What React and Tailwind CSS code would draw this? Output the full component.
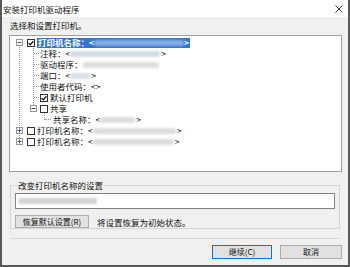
const Expander = ({ plus }) => (
  <svg width="7" height="7" viewBox="0 0 7 7" className="shrink-0">
    <rect x="0.5" y="0.5" width="6" height="6" fill="#fff" stroke="#959595" />
    <path d="M1.5 3.5h4" stroke="#3b5a8c" />
    {plus && <path d="M3.5 1.5v4" stroke="#3b5a8c" />}
  </svg>
);

const Check = ({ checked }) => (
  <svg width="8" height="8" viewBox="0 0 8 8" className="shrink-0">
    <rect x="0.5" y="0.5" width="7" height="7" fill="#fff" stroke="#333" />
    {checked && <path d="M1.6 4.1 3.2 5.7 6.4 2.2" fill="none" stroke="#1a1a1a" strokeWidth="1.3" />}
  </svg>
);

const Blur = ({ className }) => (
  <span className={`h-[6px] shrink-0 rounded-[2px] blur-[0.8px] ${className}`} />
);

export default function App() {
  return (
    <div className="flex h-[267px] w-[350px] flex-col border-x-2 border-b-2 border-[#595959] bg-[#f0f0f0] font-['Noto_Sans_CJK_SC',sans-serif] text-[8.5px] leading-[10px] text-[#111]">
      {/* title bar */}
      <div className="flex h-[17px] shrink-0 items-center justify-between bg-white pl-[1px] pr-[5px]">
        <span>安装打印机驱动程序</span>
        <svg width="8" height="8" viewBox="0 0 8 8">
          <path d="M0.5 0.5l7 7M7.5 0.5l-7 7" stroke="#222" strokeWidth="0.9" />
        </svg>
      </div>

      <div className="mt-[3px] h-[10px] pl-[8px]">选择和设置打印机。</div>

      {/* tree */}
      <div className="relative ml-[7px] mr-[6px] mt-[5px] h-[137px] border border-[#a0a0a0] bg-white pt-[1px] leading-[11px]">
        <div className="absolute left-[9px] top-[7px] h-[99px] border-l border-dotted border-[#9a9a9a]" />
        <div className="absolute left-[23px] top-[12px] h-[61px] border-l border-dotted border-[#9a9a9a]" />
        <div className="absolute left-[34px] top-[77px] h-[7px] border-l border-dotted border-[#9a9a9a]" />

        <div className="relative flex h-[11px] items-center pl-[6px]">
          <Expander />
          <span className="ml-[4px]"><Check checked /></span>
          <span className="ml-[2px] flex h-[10px] items-center bg-[#3276d3] pl-[1px] pr-[1px] font-bold text-white">
            打印机名称：&lt;
            <Blur className="w-[90px] bg-[#86ace3]" />
            &gt;
          </span>
        </div>

        {[
          ['注释：<', 'w-[90px] bg-[#d3dbe8]', '>'],
          ['驱动程序：', 'w-[76px] bg-[#dedede]', ''],
          ['端口：<', 'w-[20px] bg-[#d8dde6]', '>'],
        ].map(([t, b, e]) => (
          <div key={t} className="relative flex h-[11px] items-center pl-[30px]">
            <span className="absolute left-[24px] top-[5px] w-[5px] border-t border-dotted border-[#9a9a9a]" />
            <span>{t}</span>
            <Blur className={b} />
            <span className="ml-[1px]">{e}</span>
          </div>
        ))}

        <div className="relative flex h-[11px] items-center pl-[30px]">
          <span className="absolute left-[24px] top-[5px] w-[5px] border-t border-dotted border-[#9a9a9a]" />
          使用者代码：&lt;&gt;
        </div>

        <div className="relative flex h-[11px] items-center pl-[30px]">
          <span className="absolute left-[24px] top-[5px] w-[5px] border-t border-dotted border-[#9a9a9a]" />
          <Check checked />
          <span className="ml-[2px]">默认打印机</span>
        </div>

        <div className="relative flex h-[11px] items-center pl-[20px]">
          <Expander />
          <span className="ml-[3px]"><Check /></span>
          <span className="ml-[2px]">共享</span>
        </div>

        <div className="relative flex h-[11px] items-center pl-[43px]">
          <span className="absolute left-[35px] top-[5px] w-[6px] border-t border-dotted border-[#9a9a9a]" />
          共享名称：&lt;
          <Blur className="w-[35px] bg-[#dcdcdc]" />
          <span className="ml-[1px]">&gt;</span>
        </div>

        {['w-[83px]', 'w-[81px]'].map((w) => (
          <div key={w} className="relative flex h-[11px] items-center pl-[6px]">
            <Expander plus />
            <span className="ml-[4px]"><Check /></span>
            <span className="ml-[2px]">打印机名称：&lt;</span>
            <Blur className={`${w} bg-[#dcdcdc]`} />
            <span className="ml-[1px]">&gt;</span>
          </div>
        ))}
      </div>

      {/* rename group */}
      <fieldset className="mx-[8px] mt-[8px] h-[49px] border border-[#d5d5d5] px-[4px] pb-0">
        <legend className="ml-[2px] px-[1px] leading-[10px]">改变打印机名称的设置</legend>
        <div className="mt-[3px] flex h-[16px] items-center border border-[#838383] bg-white pl-[2px]">
          <Blur className="h-[5px] w-[79px] bg-[#d4d4d4]" />
        </div>
        <div className="mt-[6px] flex items-center">
          <button className="flex h-[13px] w-[74px] items-center justify-center border border-[#adadad] bg-[#e1e1e1] text-[8px]">
            恢复默认设置(R)
          </button>
          <span className="ml-[8px]">将设置恢复为初始状态。</span>
        </div>
      </fieldset>

      <div className="mx-[8px] mt-[9px] h-[1px] bg-[#d5d5d5]" />

      <div className="mt-[6px] flex justify-end gap-[8px] pr-[6px]">
        <button className="flex h-[14px] w-[60px] items-center justify-center border border-[#0078d7] bg-[#e1e1e1] text-[8px]">
          继续(C)
        </button>
        <button className="flex h-[14px] w-[62px] items-center justify-center border border-[#adadad] bg-[#e1e1e1] text-[8px]">
          取消
        </button>
      </div>
    </div>
  );
}
